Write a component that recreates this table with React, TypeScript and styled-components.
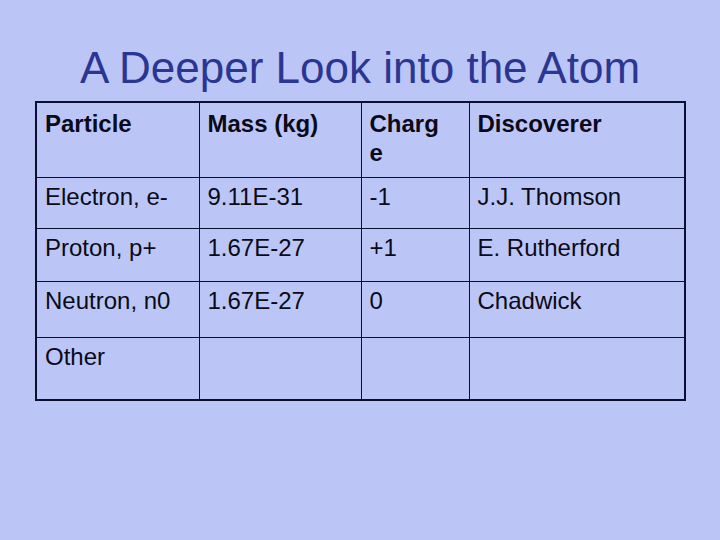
import styled, { createGlobalStyle } from 'styled-components'

const GlobalStyle = createGlobalStyle`
  html, body {
    margin: 0;
    padding: 0;
    background: #bcc6f6;
  }
  body {
    font-family: 'Liberation Sans', Arial, sans-serif;
  }
`

type Row = {
  particle: string
  mass: string
  charge: string
  discoverer: string
  height: number
}

const rows: Row[] = [
  { particle: 'Electron, e-', mass: '9.11E-31', charge: '-1', discoverer: 'J.J. Thomson', height: 51 },
  { particle: 'Proton, p+', mass: '1.67E-27', charge: '+1', discoverer: 'E. Rutherford', height: 53 },
  { particle: 'Neutron, n0', mass: '1.67E-27', charge: '0', discoverer: 'Chadwick', height: 56 },
  { particle: 'Other', mass: '', charge: '', discoverer: '', height: 63 },
]

const App: React.FC = () => {
  return (
    <Slide>
      <GlobalStyle />
      <Title>A Deeper Look into the Atom</Title>
      <Table>
        <colgroup>
          <col style={{ width: 163 }} />
          <col style={{ width: 162 }} />
          <col style={{ width: 108 }} />
          <col style={{ width: 216 }} />
        </colgroup>
        <thead>
          <Tr height={75}>
            <Th>Particle</Th>
            <Th>Mass (kg)</Th>
            <Th narrow>Charge</Th>
            <Th>Discoverer</Th>
          </Tr>
        </thead>
        <tbody>
          {rows.map((r) => (
            <Tr key={r.particle} height={r.height}>
              <Td>{r.particle}</Td>
              <Td>{r.mass}</Td>
              <Td>{r.charge}</Td>
              <Td>{r.discoverer}</Td>
            </Tr>
          ))}
        </tbody>
      </Table>
    </Slide>
  )
}

export default App

const Slide = styled.div`
  width: 720px;
  height: 540px;
  background: #bcc6f6;
  padding-top: 42px;
  box-sizing: border-box;
  overflow: hidden;
`

const Title = styled.h1`
  margin: 0 0 7px;
  font-family: 'Liberation Sans', Arial, sans-serif;
  font-weight: normal;
  font-size: 44px;
  line-height: 52px;
  color: #2b3592;
  text-align: center;
`

const Table = styled.table`
  margin-left: 35px;
  width: 649px;
  table-layout: fixed;
  border-collapse: collapse;
  border: 2px solid #0c1030;
`

const Tr = styled.tr<{ height: number }>`
  height: ${({ height }) => height}px;
`

const cell = `
  border: 1px solid #0c1030;
  padding: 4px 8px;
  vertical-align: top;
  text-align: left;
  font-family: 'Liberation Sans', Arial, sans-serif;
  font-size: 24px;
  line-height: 29px;
  color: #0a0a18;
`

const Th = styled.th<{ narrow?: boolean }>`
  ${cell}
  padding-top: 6px;
  font-weight: bold;
  ${({ narrow }) =>
    narrow &&
    `
    padding-right: 24px;
    word-break: break-all;
  `}
`

const Td = styled.td`
  ${cell}
`
